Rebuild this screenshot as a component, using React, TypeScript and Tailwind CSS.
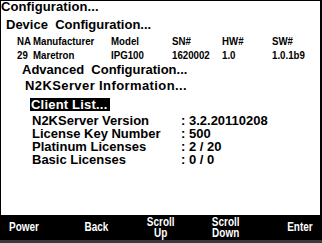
const main = "font-['Liberation_Sans',Arial,sans-serif] font-bold text-[13px] text-black"
const narrow = "font-['Liberation_Sans',Arial,sans-serif] font-bold"

const tableHead = ['NA', 'Manufacturer', 'Model', 'SN#', 'HW#', 'SW#']
const tableRow = ['29', 'Maretron', 'IPG100', '1620002', '1.0', '1.0.1b9']

const infoRows = [
  { label: 'N2KServer Version', value: '3.2.20110208' },
  { label: 'License Key Number', value: '500' },
  { label: 'Platinum Licenses', value: '2 / 20' },
  { label: 'Basic Licenses', value: '0 / 0' },
]

const softKeys = [
  { lines: ['Power'], cls: 'justify-self-start ml-[9px] origin-left' },
  { lines: ['Back'], cls: 'justify-self-center' },
  { lines: ['Scroll', 'Up'], cls: 'justify-self-center' },
  { lines: ['Scroll', 'Down'], cls: 'justify-self-center' },
  { lines: ['Enter'], cls: 'justify-self-end mr-[9px] origin-right' },
]

// the device uses a condensed bitmap font for the table and soft keys
const TableLine = ({ cells, className }: { cells: string[]; className: string }) => (
  <div className={`grid grid-cols-[16px_78px_61px_50px_50px_1fr] pl-[16px] text-[11px] leading-[11px] ${narrow} ${className}`}>
    {cells.map((c) => (
      <span key={c} className="inline-block origin-left scale-x-[0.88] whitespace-nowrap">{c}</span>
    ))}
  </div>
)

const App = () => {
  return (
    <div className="w-[322px] h-[243px] flex flex-col bg-black overflow-hidden">
      {/* Screen */}
      <div className={`flex-1 bg-white border-t border-l border-r-2 border-black ${main}`}>
        <div className="leading-[11px] tracking-[0.1px]">Configuration...</div>
        <div className="mt-[6px] pl-[5px] leading-[13px] whitespace-pre">Device  Configuration...</div>

        <TableLine cells={tableHead} className="mt-[5px]" />
        <TableLine cells={tableRow} className="mt-[3px]" />

        <div className="mt-[2px] pl-[21px] leading-[13px] whitespace-pre">Advanced  Configuration...</div>
        <div className="mt-[3px] pl-[24px] leading-[13px] tracking-[0.4px]">N2KServer Information...</div>

        <div className="mt-[6px] pl-[29px] flex">
          <span className="bg-black text-white leading-[13px] pl-[1px] pr-[3px] tracking-[0.2px]">Client List...</span>
        </div>

        <div className="mt-[3px] pl-[31px]">
          {infoRows.map((r) => (
            <div key={r.label} className="grid grid-cols-[149px_1fr] leading-[13px]">
              <span>{r.label}</span>
              <span className="whitespace-pre">: {r.value}</span>
            </div>
          ))}
        </div>
      </div>

      {/* Soft keys */}
      <div className={`h-[25px] grid grid-cols-5 items-center text-white text-[12px] leading-[11px] ${narrow}`}>
        {softKeys.map((k) => (
          <div key={k.lines.join(' ')} className={`flex flex-col items-center scale-x-[0.83] ${k.cls}`}>
            {k.lines.map((l) => (
              <span key={l}>{l}</span>
            ))}
          </div>
        ))}
      </div>
      <div className="h-[3px] bg-[#3a3a3a]" />
    </div>
  )
}

export default App
